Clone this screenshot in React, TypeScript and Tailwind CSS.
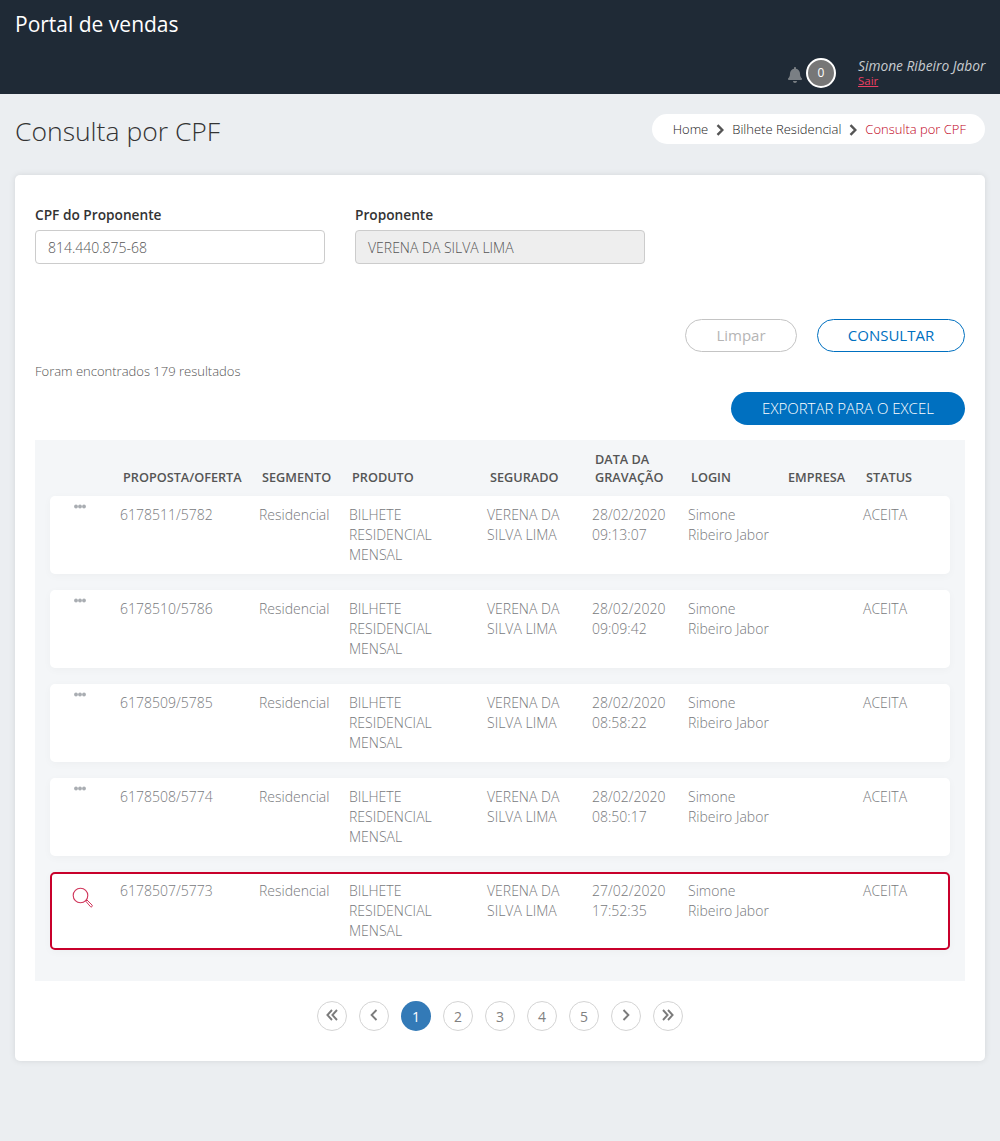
import { FaBell } from "react-icons/fa";

const columns = "grid grid-cols-[70px_139px_90px_138px_105px_96px_97px_78px_87px]";

const rows = [
  { id: "6178511/5782", date: "28/02/2020", time: "09:13:07" },
  { id: "6178510/5786", date: "28/02/2020", time: "09:09:42" },
  { id: "6178509/5785", date: "28/02/2020", time: "08:58:22" },
  { id: "6178508/5774", date: "28/02/2020", time: "08:50:17" },
  { id: "6178507/5773", date: "27/02/2020", time: "17:52:35", active: true },
];

function Chevron() {
  return (
    <svg width="9" height="12" viewBox="0 0 9 12" className="mx-[7.5px] mt-px">
      <path d="M1.5 1.2 6.3 6l-4.8 4.8" fill="none" stroke="#555" strokeWidth="2.4" />
    </svg>
  );
}

function Dots() {
  return (
    <svg width="12" height="5" viewBox="0 0 12 5" className="ml-[24px] mt-[8px]">
      <circle cx="2" cy="2.5" r="1.9" fill="#a9adb2" />
      <circle cx="6" cy="2.5" r="1.9" fill="#a9adb2" />
      <circle cx="10" cy="2.5" r="1.9" fill="#a9adb2" />
    </svg>
  );
}

function Lens() {
  return (
    <svg width="22" height="22" viewBox="0 0 22 22" className="ml-[22px] mt-[15px]">
      <circle cx="8.5" cy="8.5" r="7.3" fill="none" stroke="#d0355a" strokeWidth="1.1" />
      <path d="M13.8 14.2 15 13l5 5a1 1 0 0 1-1.6 1.6z" fill="#fff" stroke="#d0355a" strokeWidth="1" />
    </svg>
  );
}

// Setas da paginacao
function Arrow({ d, w }: { d: string; w: number }) {
  return (
    <svg width={w} height="12" viewBox={`0 0 ${w} 12`} className="-mt-[2px]">
      <path d={d} fill="none" stroke="#7b7b7b" strokeWidth="1.9" />
    </svg>
  );
}

function Row({ id, date, time, active }: { id: string; date: string; time: string; active?: boolean }) {
  const cell = `pt-[9px] ${active ? "-ml-[2px] -mt-[2px]" : ""}`;
  return (
    <div
      className={`${columns} h-[78px] rounded-[5px] bg-white text-[14px] leading-[20px] font-light text-[#77797c] shadow-[0_2px_8px_rgba(0,0,0,0.03)] ${
        active ? "border-2 border-[#c8002b] -mb-px" : ""
      }`}
    >
      <div className={active ? "-ml-[2px] -mt-[2px]" : ""}>{active ? <Lens /> : <Dots />}</div>
      <div className={cell}>{id}</div>
      <div className={cell}>Residencial</div>
      <div className={cell}>
        BILHETE
        <br />
        RESIDENCIAL
        <br />
        MENSAL
      </div>
      <div className={cell}>
        VERENA DA
        <br />
        SILVA LIMA
      </div>
      <div className={cell}>
        {date}
        <br />
        {time}
      </div>
      <div className={cell}>
        Simone
        <br />
        Ribeiro Jabor
      </div>
      <div />
      <div className={cell}>ACEITA</div>
    </div>
  );
}

function PageButton({ children, current }: { children: React.ReactNode; current?: boolean }) {
  return (
    <div
      className={`flex h-[30px] w-[30px] items-center justify-center rounded-full text-[14px] ${
        current ? "bg-[#337ab7] text-white" : "border border-[#d4d4d4] text-[#808080]"
      }`}
    >
      {children}
    </div>
  );
}

export default function App() {
  return (
    <div className="min-h-[1141px] bg-[#ebeef1] font-['Open_Sans',sans-serif] text-[#333]">
      {/* Topo */}
      <header className="relative h-[94px] bg-[#1f2a36]">
        <div className="pl-[15px] pt-[10px] text-[21px] leading-[28px] font-medium text-white">Portal de vendas</div>
        <div className="absolute left-[787px] top-[57px] flex items-center">
          <FaBell size={16} className="mt-[4px] text-[#7a7f84]" />
          <div className="ml-[3px] flex h-[30px] w-[30px] items-center justify-center rounded-full border-2 border-white bg-[#777] text-[12px] text-white">
            0
          </div>
          <div className="ml-[22px] mt-px text-[13.75px] leading-[16px]">
            <div className="italic text-[#c8ccd0]">Simone Ribeiro Jabor</div>
            <div className="text-[11.5px] leading-[14px] text-[#ea3f62] underline">Sair</div>
          </div>
        </div>
      </header>

      {/* Titulo e breadcrumb */}
      <div className="flex h-[81px] items-start justify-between px-[15px]">
        <h1 className="pt-[18px] text-[26.5px] leading-[38px] font-light text-[#333]">Consulta por CPF</h1>
        <div className="mt-[20px] flex h-[30px] items-center rounded-full bg-white pl-[21px] pr-[19px] pt-px text-[13px] font-light text-[#1a1a1a]">
          Home
          <Chevron />
          Bilhete Residencial
          <Chevron />
          <span className="text-[#c00020]">Consulta por CPF</span>
        </div>
      </div>

      {/* Card principal */}
      <main className="mx-[15px] h-[886px] rounded-[5px] bg-white px-[20px] pt-[30px] shadow-[0_0_6px_rgba(0,0,0,0.1)]">
        <div className="flex gap-[30px]">
          <div className="w-[290px]">
            <label className="block text-[13.7px] leading-[20px] font-semibold text-[#333]">CPF do Proponente</label>
            <div className="mt-[5px] flex h-[34px] items-center rounded-[4px] border border-[#ccc] px-[12px] pt-px text-[14px] font-light text-[#555]">
              814.440.875-68
            </div>
          </div>
          <div className="w-[290px]">
            <label className="block text-[13.7px] leading-[20px] font-semibold text-[#333]">Proponente</label>
            <div className="mt-[5px] flex h-[34px] items-center rounded-[4px] border border-[#ccc] bg-[#eee] px-[12px] pt-px text-[14px] font-light text-[#555]">
              VERENA DA SILVA LIMA
            </div>
          </div>
        </div>

        <div className="mt-[55px] flex justify-end gap-[20px]">
          <button className="h-[33px] w-[112px] rounded-full border border-[#c4c4c4] text-[15px] text-[#b5b5b5]">Limpar</button>
          <button className="h-[33px] w-[148px] rounded-full border border-[#0070c0] text-[15px] text-[#0070c0]">CONSULTAR</button>
        </div>

        <p className="mt-[10px] text-[13px] leading-[18px] font-light text-[#555]">Foram encontrados 179 resultados</p>

        <div className="mt-[12px] flex justify-end">
          <button className="h-[33px] w-[234px] rounded-full bg-[#0070c0] text-[15px] font-light text-white">EXPORTAR PARA O EXCEL</button>
        </div>

        {/* Tabela */}
        <div className="mt-[15px] h-[541px] bg-[#f4f6f8] px-[15px]">
          <div className={`${columns} h-[56px] items-end pb-[10px] text-[12.7px] leading-[18px] font-semibold text-[#555]`}>
            <div />
            <div className="pl-[3px]">PROPOSTA/OFERTA</div>
            <div className="pl-[3px]">SEGMENTO</div>
            <div className="pl-[3px]">PRODUTO</div>
            <div className="pl-[3px]">SEGURADO</div>
            <div className="pl-[3px]">
              DATA DA
              <br />
              GRAVAÇÃO
            </div>
            <div className="pl-[3px]">LOGIN</div>
            <div className="pl-[3px]">EMPRESA</div>
            <div className="pl-[3px]">STATUS</div>
          </div>
          <div className="flex flex-col gap-[16px]">
            {rows.map((row) => (
              <Row key={row.id} {...row} />
            ))}
          </div>
        </div>

        {/* Paginacao */}
        <div className="mt-[20px] flex justify-center gap-[12px]">
          <PageButton>
            <Arrow w={12} d="M6 1 1.4 6 6 11M11 1 6.4 6l4.6 5" />
          </PageButton>
          <PageButton>
            <Arrow w={8} d="M6.5 1 1.6 6l4.9 5" />
          </PageButton>
          <PageButton current>1</PageButton>
          <PageButton>2</PageButton>
          <PageButton>3</PageButton>
          <PageButton>4</PageButton>
          <PageButton>5</PageButton>
          <PageButton>
            <Arrow w={8} d="M1.5 1l4.9 5-4.9 5" />
          </PageButton>
          <PageButton>
            <Arrow w={12} d="M1 1l4.6 5L1 11M6 1l4.6 5L6 11" />
          </PageButton>
        </div>
      </main>
    </div>
  );
}
